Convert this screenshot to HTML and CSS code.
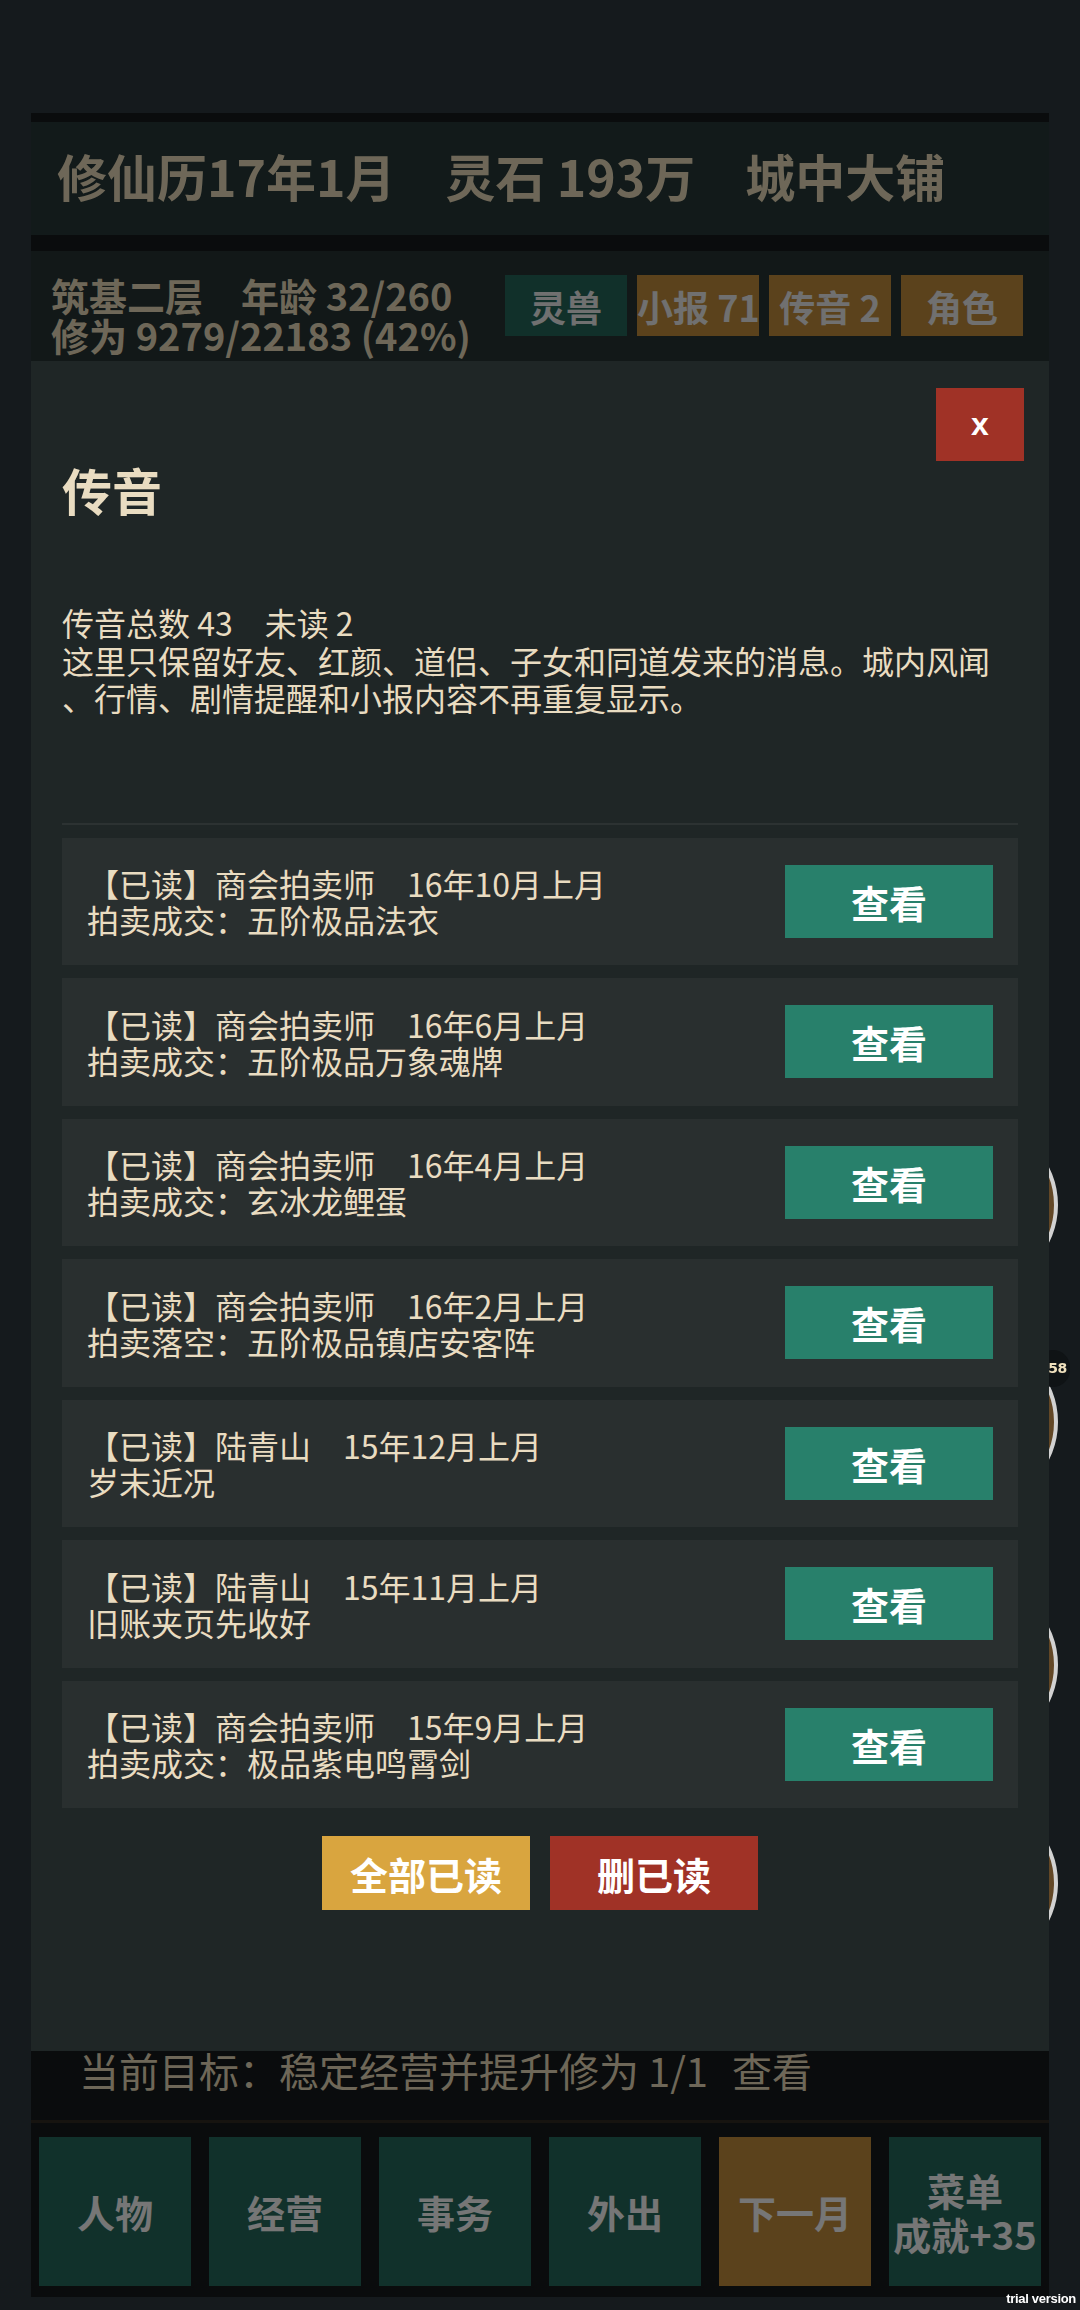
FILE: index.html
```html
<!DOCTYPE html>
<html>
<head>
  <meta charset="utf-8">
  <link rel="stylesheet" href="styles.css">
</head>
<body>
  <div id="app">
    <div class="topbar">修仙历17年1月　灵石 193万　城中大铺</div>
    <div class="status">
      <div class="status-top">
        <div class="stats">
          <div>筑基二层　年龄 32/260</div>
          <div>修为 9279/22183 (42%)</div>
        </div>
        <div class="tabs">
          <button class="tab green">灵兽</button>
          <button class="tab brown">小报 71</button>
          <button class="tab brown">传音 2</button>
          <button class="tab brown">角色</button>
        </div>
      </div>
      <div class="stats-more">
        <span>心情 良好</span>
        <span>灵感 32</span>
        <span>街坊 友善</span>
        <span>人</span>
        <span>名望 128</span>
      </div>
    </div>
    <div class="goal">当前目标：稳定经营并提升修为 1/1<span class="goal-link">查看</span></div>
    <div class="nav">
      <button>人物</button>
      <button>经营</button>
      <button>事务</button>
      <button>外出</button>
      <button class="next">下一月</button>
      <button>菜单<br>成就+35</button>
    </div>
  </div>

  <div class="side">
    <div class="orb" style="top: 1121px;"></div>
    <div class="orb" style="top: 1338px;"></div>
    <div class="orb" style="top: 1581px;"></div>
    <div class="orb" style="top: 1799px;"></div>
    <div class="badge">158</div>
  </div>

  <div id="overlay"></div>

  <div id="dialog">
    <div class="dlg-head">
      <button class="close">x</button>
    </div>
    <h2 class="dlg-title">传音</h2>
    <div class="info">
      传音总数 43　未读 2<br>
      这里只保留好友、红颜、道侣、子女和同道发来的消息。城内风闻、行情、剧情提醒和小报内容不再重复显示。
    </div>
    <div class="msg-list">
      <div class="msg">
        <div class="msg-text">【已读】商会拍卖师　16年10月上月<br>拍卖成交：五阶极品法衣</div>
        <button class="view">查看</button>
      </div>
      <div class="msg">
        <div class="msg-text">【已读】商会拍卖师　16年6月上月<br>拍卖成交：五阶极品万象魂牌</div>
        <button class="view">查看</button>
      </div>
      <div class="msg">
        <div class="msg-text">【已读】商会拍卖师　16年4月上月<br>拍卖成交：玄冰龙鲤蛋</div>
        <button class="view">查看</button>
      </div>
      <div class="msg">
        <div class="msg-text">【已读】商会拍卖师　16年2月上月<br>拍卖落空：五阶极品镇店安客阵</div>
        <button class="view">查看</button>
      </div>
      <div class="msg">
        <div class="msg-text">【已读】陆青山　15年12月上月<br>岁末近况</div>
        <button class="view">查看</button>
      </div>
      <div class="msg">
        <div class="msg-text">【已读】陆青山　15年11月上月<br>旧账夹页先收好</div>
        <button class="view">查看</button>
      </div>
      <div class="msg">
        <div class="msg-text">【已读】商会拍卖师　15年9月上月<br>拍卖成交：极品紫电鸣霄剑</div>
        <button class="view">查看</button>
      </div>
    </div>
    <div class="actions">
      <button class="all-read">全部已读</button>
      <button class="del-read">删已读</button>
    </div>
  </div>

  <div class="trial">trial version</div>
</body>
</html>
```

FILE: styles.css
```css
* {
  box-sizing: border-box;
}

body {
  margin: 0;
  background-color: #2a343a;
  font-family: "Noto Sans CJK SC", "Noto Sans", sans-serif;
  color: #dccfb0;
}

button {
  border: none;
  padding: 0;
  font-family: inherit;
  cursor: pointer;
}

#app {
  width: 1018px;
  height: 2184px;
  margin: 113px auto 0;
  padding-top: 9px;
  background-color: #14181a;
  display: flex;
  flex-direction: column;
}

.topbar {
  height: 113px;
  padding: 0 0 8px 26px;
  display: flex;
  align-items: center;
  background-color: #243434;
  font-size: 50px;
  font-weight: bold;
  line-height: 56px;
}

.status {
  flex: 1;
  margin-top: 16px;
  padding: 24px 26px 0 20px;
  background-color: #243030;
  font-size: 38px;
  font-weight: bold;
  line-height: 40px;
  overflow: hidden;
}

.status-top {
  display: flex;
  justify-content: space-between;
}

.tabs {
  display: flex;
  gap: 10px;
}

.tab {
  width: 122px;
  height: 61px;
  font-size: 36px;
  font-weight: bold;
  color: #e0e0e0;
  white-space: nowrap;
}

.tab.green {
  background-color: #226054;
}

.tab.brown {
  background-color: #b68438;
}

.stats-more {
  margin-top: 4px;
  display: grid;
  grid-template-columns: 234px 255px 220px 49px auto;
}

.goal {
  height: 82px;
  padding: 6px 0 0 48px;
  font-size: 40px;
  line-height: 46px;
  border-bottom: 3px solid #2e2820;
}

.goal-link {
  margin-left: 24px;
}

.nav {
  height: 174px;
  padding: 14px 8px 11px;
  display: grid;
  grid-template-columns: repeat(6, 1fr);
  gap: 18px;
}

.nav button {
  background-color: #226256;
  color: #ececec;
  font-size: 38px;
  font-weight: bold;
  line-height: 44px;
}

.nav .next {
  background-color: #b68438;
}

/* floating round buttons on the right, partly under the dialog */
.orb {
  position: absolute;
  left: 890px;
  width: 168px;
  height: 168px;
  border-radius: 50%;
  border: 4px solid #d2d2d2;
  background: radial-gradient(circle at 60% 50%, #2a1e10 0 6px, #6a4d29 8px, #5a4123 100%);
  z-index: 2;
}

.badge {
  position: absolute;
  top: 1350px;
  left: 1036px;
  width: 34px;
  height: 37px;
  border-radius: 18px;
  background-color: #0f1315;
  color: #efe0bd;
  font-family: "DejaVu Sans", sans-serif;
  font-size: 14px;
  font-weight: bold;
  line-height: 37px;
  text-align: center;
  letter-spacing: -0.5px;
  z-index: 2;
}

#overlay {
  position: fixed;
  top: 0;
  left: 0;
  right: 0;
  bottom: 0;
  background-color: rgba(0, 0, 0, 0.5);
  z-index: 1;
}

#dialog {
  position: absolute;
  top: 361px;
  left: 31px;
  width: 1018px;
  height: 1690px;
  padding: 27px 31px 0;
  background-color: #1f2626;
  color: #e9dcc1;
  z-index: 3;
}

.dlg-head {
  display: flex;
  justify-content: flex-end;
}

.close {
  width: 88px;
  height: 73px;
  margin-right: -6px;
  background-color: #a03226;
  color: #fff;
  font-family: "Liberation Sans", sans-serif;
  font-size: 32px;
  font-weight: bold;
}

.dlg-title {
  margin: 0;
  font-size: 50px;
  line-height: 56px;
  font-weight: bold;
}

.info {
  margin-top: 87px;
  font-size: 32px;
  line-height: 37.5px;
  word-break: break-all;
  line-break: anywhere;
}

.msg-list {
  margin-top: 106px;
  padding-top: 13px;
  border-top: 2px solid #2c3232;
  display: flex;
  flex-direction: column;
  gap: 13px;
}

.msg {
  height: 127.5px;
  padding: 0 25px 0 25px;
  display: flex;
  align-items: center;
  justify-content: space-between;
  background-color: #292f2f;
}

.msg-text {
  font-size: 32px;
  line-height: 36px;
}

.view {
  width: 208px;
  height: 73px;
  background-color: #28806b;
  color: #fff;
  font-size: 38px;
  font-weight: bold;
}

.actions {
  margin-top: 28px;
  display: flex;
  justify-content: center;
  gap: 20px;
}

.actions button {
  width: 208px;
  height: 74px;
  color: #fff;
  font-size: 38px;
  font-weight: bold;
}

.all-read {
  background-color: #d9a53f;
}

.del-read {
  background-color: #a03226;
}

.trial {
  position: fixed;
  right: 4px;
  bottom: 4px;
  color: #fff;
  font-family: "Liberation Sans", sans-serif;
  font-size: 13px;
  font-weight: bold;
  line-height: 14px;
  letter-spacing: -0.3px;
  z-index: 5;
}
```
